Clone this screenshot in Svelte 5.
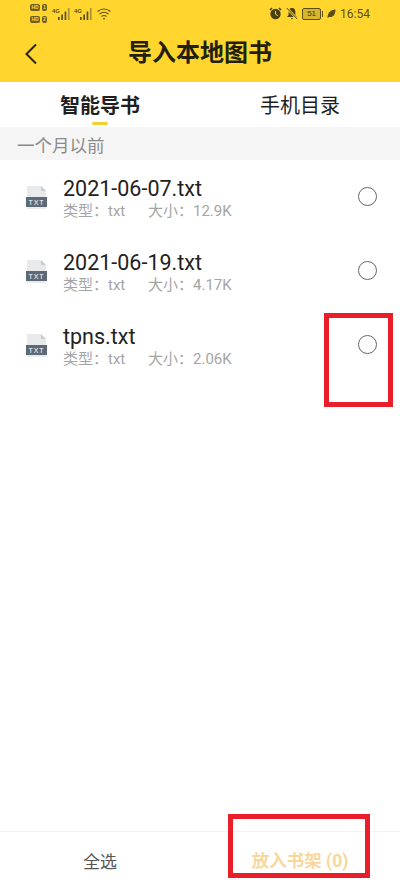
<script>
	const files = [
		{ name: '2021-06-07.txt', size: '12.9K' },
		{ name: '2021-06-19.txt', size: '4.17K' },
		{ name: 'tpns.txt', size: '2.06K' }
	]
</script>

<div class="page">
	<header class="top">
		<div class="status">
			<div class="status-left">
				<div class="sims">
					<div class="sim"><span class="hd">HD</span><span class="slot">1</span></div>
					<div class="sim"><span class="hd">HD</span><span class="slot">2</span></div>
				</div>
				{#each [0, 1] as s}
					<div class="signal">
						<span class="net">4G</span>
						<svg width="12" height="12" viewBox="0 0 12 12">
							<rect x="0" y="9" width="1.700" height="3" fill="#5c4f1c" />
							<rect x="3.300" y="6.500" width="1.700" height="5.500" fill="#5c4f1c" />
							<rect x="6.600" y="3.500" width="1.700" height="8.500" fill="#5c4f1c" />
							<rect x="9.900" y="0" width="1.700" height="12" fill="#a8923a" />
						</svg>
					</div>
				{/each}
				<svg class="wifi" width="14" height="12" viewBox="0 0 14 12" fill="none" stroke="#5c4f1c" stroke-width="1.200">
					<path d="M0.500 3.500 Q7 -1.500 13.500 3.500" />
					<path d="M2.500 6 Q7 2.500 11.500 6" />
					<path d="M4.500 8.500 Q7 6.500 9.500 8.500" />
					<circle cx="7" cy="10.700" r="0.900" fill="#5c4f1c" stroke="none" />
				</svg>
			</div>
			<div class="status-right">
				<svg width="13" height="13" viewBox="0 0 13 13">
					<circle cx="6.500" cy="7" r="5.200" fill="#4a4016" />
					<path d="M1 3 L3 1 M12 3 L10 1" stroke="#4a4016" stroke-width="1.600" />
					<path d="M6.500 4 V7.300 L8.800 8.600" stroke="#ffd52e" stroke-width="1" fill="none" />
				</svg>
				<svg width="12" height="13" viewBox="0 0 12 13">
					<path d="M6 1 C3.500 1 2.600 3 2.600 5 V8 L1 10 H11 L9.400 8 V5 C9.400 3 8.500 1 6 1 Z" fill="#4a4016" />
					<path d="M4.800 11 H7.200 L6 12.500 Z" fill="#4a4016" />
					<path d="M0.800 1 L11.200 12" stroke="#ffd52e" stroke-width="2.400" />
					<path d="M0.800 1 L11.200 12" stroke="#4a4016" stroke-width="1" />
				</svg>
				<div class="battery"><span class="level">51</span></div>
				<span class="nub"></span>
				<svg width="9" height="10" viewBox="0 0 9 10">
					<path d="M0.500 9 C0.500 4 3 1 8.500 0.500 C8.500 6 6 8.500 2 8 Z" fill="#5c4f1c" />
				</svg>
				<span class="clock">16:54</span>
			</div>
		</div>
		<div class="title-bar">
			<svg class="back" width="14" height="22" viewBox="0 0 14 22" fill="none" stroke="#2a2610" stroke-width="2">
				<path d="M12 1.500 L2.500 11 L12 20.500" />
			</svg>
			<h1>导入本地图书</h1>
		</div>
	</header>

	<nav class="tabs">
		<div class="tab active">智能导书<span class="marker"></span></div>
		<div class="tab">手机目录</div>
	</nav>

	<div class="section">一个月以前</div>

	<ul class="files">
		{#each files as file}
			<li class="row">
				<svg class="file-icon" width="21" height="24" viewBox="0 0 21 24">
					<path d="M1 0 H15 L20 5 V23 H1 Z" fill="#e9eaec" />
					<path d="M15 0 L20 5 H15 Z" fill="#c9ccd1" />
					<rect x="0" y="11" width="21" height="10" fill="#5d6976" />
					<text x="10.500" y="19" class="txt">TXT</text>
				</svg>
				<div class="info">
					<div class="name">{file.name}</div>
					<div class="meta"><span class="type">类型：txt</span><span>大小：{file.size}</span></div>
				</div>
				<span class="radio"></span>
			</li>
		{/each}
	</ul>

	<footer class="bottom">
		<div class="action">全选</div>
		<div class="action add">放入书架 (0)</div>
	</footer>

	<div class="mark mark-radio"></div>
	<div class="mark mark-add"></div>
</div>

<style>
	:global(body) {
		margin: 0;
		background: #fff;
	}
	.page {
		position: relative;
		width: 400px;
		height: 888px;
		display: flex;
		flex-direction: column;
		overflow: hidden;
		font-family: "Noto Sans", "Noto Sans CJK SC", sans-serif;
		background: #fff;
	}
	.top {
		height: 82px;
		background: #ffd52e;
		flex: none;
	}
	.status {
		height: 27px;
		padding: 0 30px;
		box-sizing: border-box;
		display: flex;
		justify-content: space-between;
		align-items: center;
	}
	.status-left, .status-right {
		display: flex;
		align-items: center;
	}
	.sims {
		display: flex;
		flex-direction: column;
		gap: 5px;
		margin-right: 5px;
	}
	.sim {
		display: flex;
		gap: 2px;
		height: 7px;
	}
	.hd {
		font: bold 5px/7px "Liberation Sans", sans-serif;
		background: #6b5e26;
		color: #ffd52e;
		border-radius: 2px;
		width: 10px;
		text-align: center;
	}
	.slot {
		font: bold 5px/7px "Liberation Sans", sans-serif;
		background: #6b5e26;
		color: #ffd52e;
		border-radius: 2px;
		width: 5px;
		text-align: center;
	}
	.signal {
		position: relative;
		width: 18px;
		height: 12px;
		display: flex;
		justify-content: flex-end;
		margin-right: 4px;
	}
	.net {
		position: absolute;
		left: 0;
		top: 0;
		font: bold 6px/7px "Liberation Sans", sans-serif;
		color: #5c4f1c;
	}
	.wifi {
		margin-left: 1px;
	}
	.status-right {
		gap: 4px;
	}
	.battery {
		width: 17px;
		height: 10px;
		border: 1px solid #5c4f1c;
		border-radius: 2px;
		display: flex;
		align-items: center;
		justify-content: center;
		background: #d8b52a;
	}
	.level {
		font: 8px/10px "Liberation Sans", sans-serif;
		color: #3e3610;
	}
	.nub {
		width: 1px;
		height: 6px;
		background: #5c4f1c;
		margin-left: -3px;
	}
	.clock {
		font: 12px/14px Roboto, sans-serif;
		color: #5c4f1c;
	}
	.title-bar {
		position: relative;
		height: 55px;
		display: flex;
		align-items: center;
		justify-content: center;
	}
	.back {
		position: absolute;
		left: 24px;
		top: 16px;
	}
	h1 {
		margin: 0 0 7px;
		font-size: 24px;
		line-height: 30px;
		font-weight: 700;
		color: #231f0c;
		font-family: "Noto Sans CJK SC", sans-serif;
	}
	.tabs {
		height: 45px;
		display: flex;
		flex: none;
	}
	.tab {
		position: relative;
		flex: 1;
		text-align: center;
		font-size: 20px;
		line-height: 46px;
		color: #1f1f1f;
		font-family: "Noto Sans CJK SC", sans-serif;
	}
	.active {
		font-weight: 700;
	}
	.marker {
		position: absolute;
		left: 92px;
		top: 40px;
		width: 16px;
		height: 3px;
		border-radius: 2px;
		background: #f7cf2c;
	}
	.section {
		height: 33px;
		flex: none;
		background: #f5f5f5;
		color: #8b8b8b;
		font-size: 17.500px;
		line-height: 35px;
		padding-left: 17px;
		font-family: "Noto Sans CJK SC", sans-serif;
	}
	.files {
		list-style: none;
		margin: 0;
		padding: 0;
		flex: 1;
	}
	.row {
		height: 74px;
		display: flex;
		align-items: flex-start;
		padding: 16px 23px 0 26px;
		box-sizing: border-box;
	}
	.file-icon {
		flex: none;
		margin-top: 10px;
	}
	.txt {
		font: 7px "Liberation Sans", sans-serif;
		fill: #fff;
		text-anchor: middle;
		letter-spacing: 1px;
	}
	.info {
		flex: 1;
		margin-left: 16px;
	}
	.name {
		font-size: 21.500px;
		line-height: 25px;
		color: #222;
		font-family: Roboto, "Noto Sans CJK SC", sans-serif;
	}
	.meta {
		font-size: 15px;
		line-height: 20px;
		color: #a5a5a5;
		display: flex;
		font-family: Roboto, "Noto Sans CJK SC", sans-serif;
	}
	.type {
		width: 85px;
	}
	.radio {
		flex: none;
		width: 17px;
		height: 17px;
		margin-top: 11px;
		border: 1px solid #666;
		border-radius: 50%;
	}
	.bottom {
		height: 56px;
		flex: none;
		display: flex;
		border-top: 1px solid #f3f3f3;
	}
	.action {
		flex: 1;
		text-align: center;
		font-size: 17px;
		line-height: 58px;
		color: #555;
		font-family: "Noto Sans CJK SC", sans-serif;
	}
	.add {
		color: #f8d79c;
		font-weight: 700;
		font-size: 17.500px;
		font-family: Roboto, "Noto Sans CJK SC", sans-serif;
	}
	.mark {
		position: absolute;
		box-sizing: border-box;
		border: 5px solid #e81f2b;
	}
	.mark-radio {
		left: 324px;
		top: 313px;
		width: 69px;
		height: 94px;
	}
	.mark-add {
		left: 228px;
		top: 814px;
		width: 142px;
		height: 64px;
	}
</style>
